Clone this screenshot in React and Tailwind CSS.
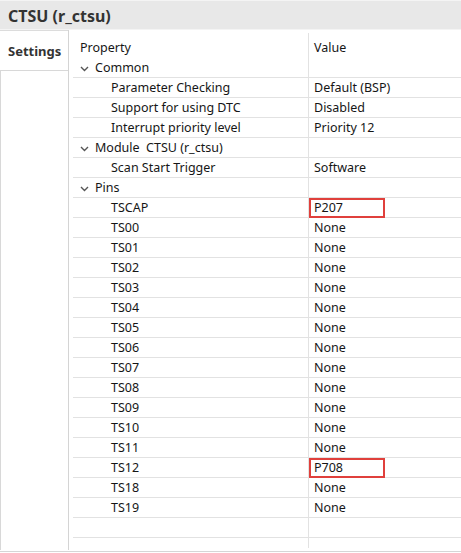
import React from 'react';

const FONT = { fontFamily: '"Noto Sans", "Noto Sans CJK SC", sans-serif' };

const rows = [
  { kind: 'group', label: 'Common' },
  { kind: 'item', label: 'Parameter Checking', value: 'Default (BSP)' },
  { kind: 'item', label: 'Support for using DTC', value: 'Disabled' },
  { kind: 'item', label: 'Interrupt priority level', value: 'Priority 12' },
  { kind: 'group', label: 'Module  CTSU (r_ctsu)' },
  { kind: 'item', label: 'Scan Start Trigger', value: 'Software' },
  { kind: 'group', label: 'Pins' },
  { kind: 'item', label: 'TSCAP', value: 'P207', mark: true },
  ...['00', '01', '02', '03', '04', '05', '06', '07', '08', '09', '10', '11'].map((n) => ({ kind: 'item', label: 'TS' + n, value: 'None' })),
  { kind: 'item', label: 'TS12', value: 'P708', mark: true },
  { kind: 'item', label: 'TS18', value: 'None' },
  { kind: 'item', label: 'TS19', value: 'None' },
  { kind: 'empty' },
];

const Chevron = () => (
  <svg width="9" height="6" viewBox="0 0 9 6" className="mr-[6px] shrink-0">
    <polyline points="1,1 4.5,4.5 8,1" fill="none" stroke="#555" strokeWidth="1.4" />
  </svg>
);

const Row = ({ row }) => (
  <div className="flex h-[20px] border-b border-[#e2e2e2] text-[12.5px] text-[#161616] leading-none">
    <div className={'w-[235px] flex items-center pt-[2px] whitespace-pre ' + (row.kind === 'group' ? 'pl-[7px]' : 'pl-[38px]')}>
      {row.kind === 'group' && <Chevron />}
      {row.label}
    </div>
    <div className="relative flex-1 flex items-center pt-[2px] pl-[5px] border-l border-[#e2e2e2]">
      {row.value}
      {row.mark && <span className="absolute left-0 top-0 w-[76px] h-[20px] border-2 border-[#e0403c]" />}
    </div>
  </div>
);

export default function App() {
  return (
    <div className="w-[461px] h-[553px] bg-white flex flex-col overflow-hidden" style={FONT}>
      <div className="h-[30px] shrink-0 bg-[#e8e8e8] border-t border-[#f4f4f4] border-b border-[#dedede] flex items-center pl-2 pt-[2px] text-[16px] font-bold text-[#333]">
        CTSU (r_ctsu)
      </div>
      <div className="flex flex-1 pb-[1px] border-b border-[#d6d6d6] mb-[1px]">
        <div className="w-[69px] shrink-0 flex flex-col border-r border-[#d4d4d4]">
          <div className="h-[40px] shrink-0 border-t border-[#dcdcdc] flex items-center pl-2 pt-[2px] text-[13px] font-bold text-[#333]">
            Settings
          </div>
          <div className="flex-1 border-l border-t border-[#d8d8d8]" />
        </div>
        <div className="flex-1 flex flex-col ml-[4px]">
          <div className="flex h-[28px] text-[12.5px] text-[#161616] leading-none">
            <div className="w-[235px] pl-[7px] pt-[12px]">Property</div>
            <div className="flex-1 pl-[5px] pt-[9px] mt-[3px] border-l border-[#e2e2e2]">Value</div>
          </div>
          {rows.map((row, i) => (
            <Row key={i} row={row} />
          ))}
          <div className="flex flex-1">
            <div className="w-[235px]" />
            <div className="flex-1 border-l border-[#e2e2e2] mb-[2px]" />
          </div>
        </div>
      </div>
    </div>
  );
}
